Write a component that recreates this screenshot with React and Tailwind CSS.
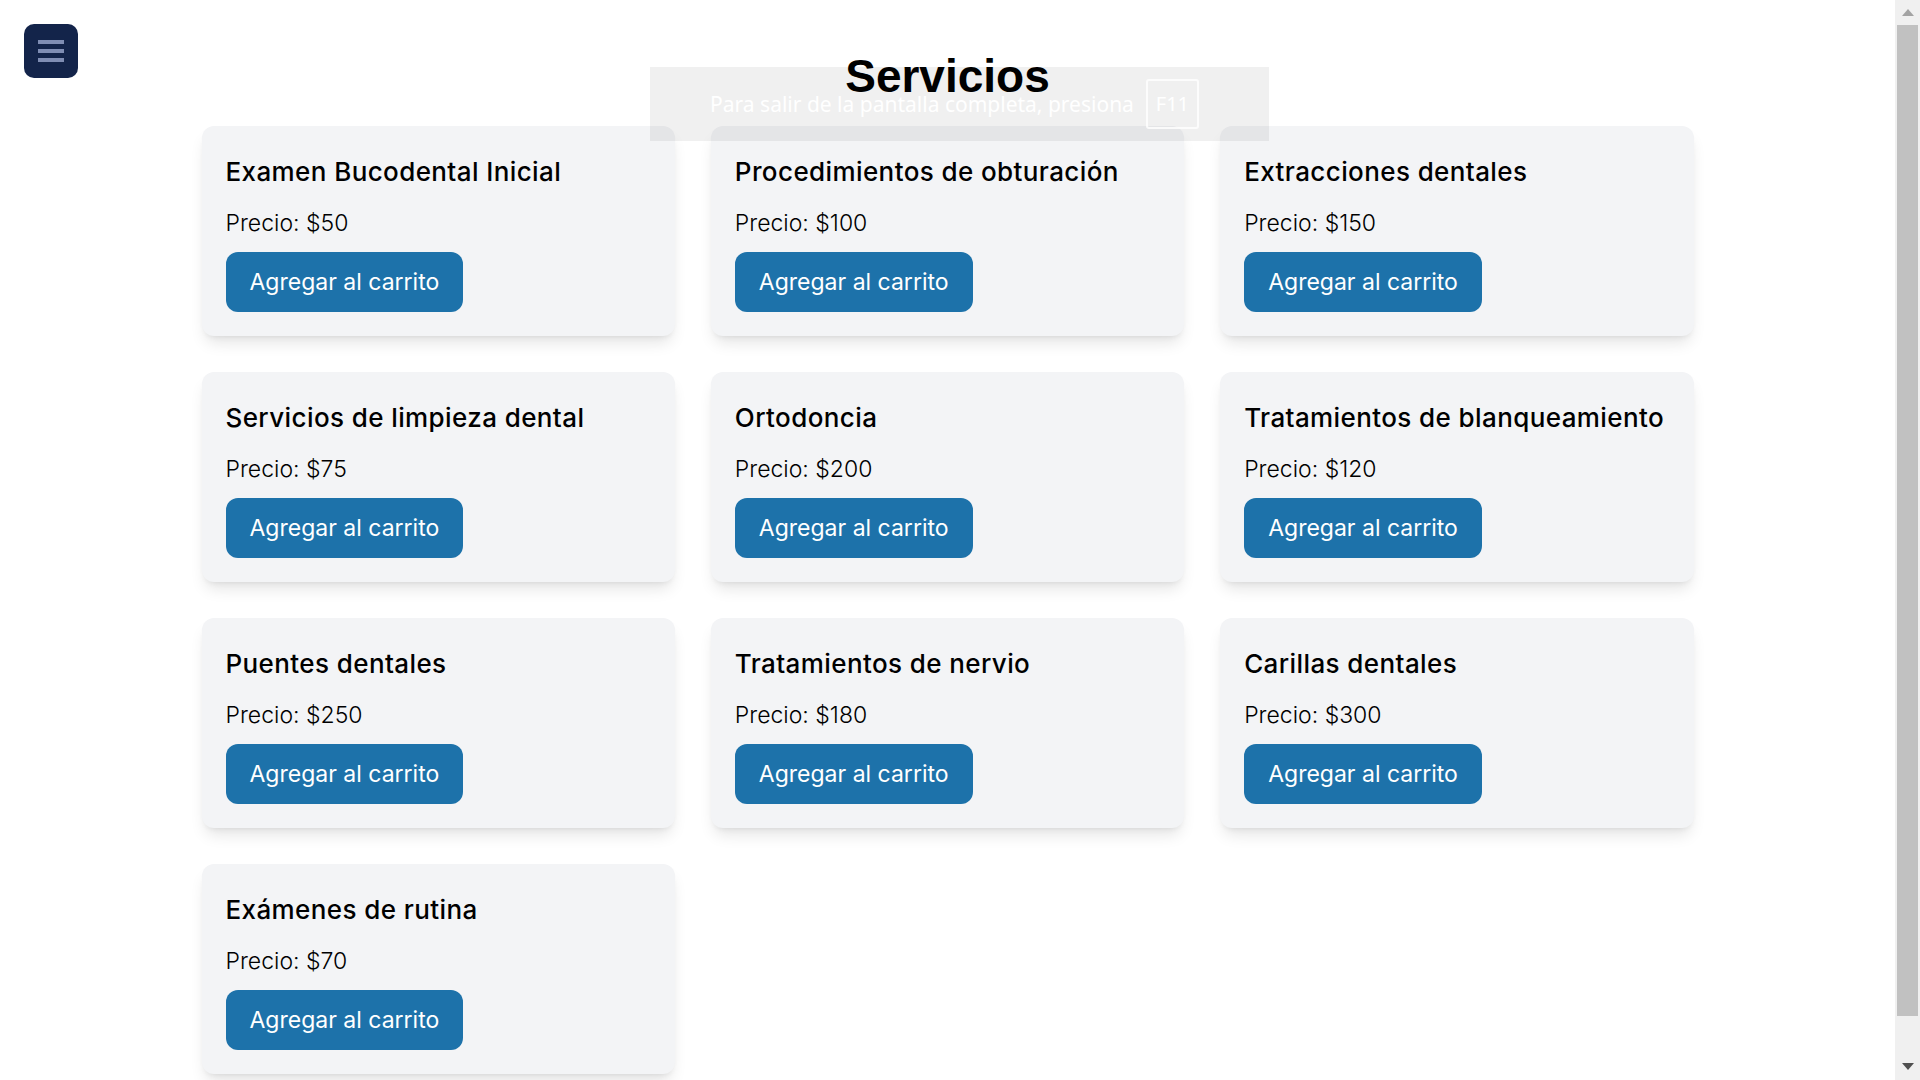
import React from "react";

const servicios = [
  { nombre: "Examen Bucodental Inicial", precio: 50 },
  { nombre: "Procedimientos de obturación", precio: 100 },
  { nombre: "Extracciones dentales", precio: 150 },
  { nombre: "Servicios de limpieza dental", precio: 75 },
  { nombre: "Ortodoncia", precio: 200 },
  { nombre: "Tratamientos de blanqueamiento", precio: 120 },
  { nombre: "Puentes dentales", precio: 250 },
  { nombre: "Tratamientos de nervio", precio: 180 },
  { nombre: "Carillas dentales", precio: 300 },
  { nombre: "Exámenes de rutina", precio: 70 },
];

const ServicioCard = ({ nombre, precio }) => (
  <div className="bg-[#f3f4f6] rounded-xl shadow-lg px-6 pt-6 pb-6 flex flex-col items-start">
    <h2 className="mt-[6px] text-[26px] leading-[32px] font-medium tracking-[0.4px] text-black">
      {nombre}
    </h2>
    <p className="mt-[19px] text-[23px] leading-[32px] font-light text-black">
      Precio: ${precio}
    </p>
    <button className="mt-[13px] bg-[#1d72aa] text-white text-[23px] leading-[32px] font-normal px-6 py-[14px] rounded-xl">
      Agregar al carrito
    </button>
  </div>
);

// barra de desplazamiento del navegador
const Scrollbar = () => (
  <div className="w-[25px] shrink-0 h-full bg-[#f0f0f0] flex flex-col items-center">
    <div className="h-[25px] flex items-center justify-center">
      <svg width="12" height="7" viewBox="0 0 12 7">
        <polygon points="6,0 12,7 0,7" fill="#a3a3a3" />
      </svg>
    </div>
    <div className="w-[21px] h-[991px] bg-[#c1c1c1]" />
    <div className="flex-1 flex items-end justify-center pb-[10px]">
      <svg width="12" height="7" viewBox="0 0 12 7">
        <polygon points="0,0 12,0 6,7" fill="#505050" />
      </svg>
    </div>
  </div>
);

export default function App() {
  return (
    <div className="h-screen w-full flex overflow-hidden bg-white font-['Inter',sans-serif]">
      <div className="relative flex-1 overflow-hidden">
        <button className="absolute top-[24px] left-[24px] w-[54px] h-[54px] rounded-[10px] bg-[#13244a] flex flex-col items-center justify-center gap-[5px]">
          <span className="w-[26px] h-[4px] bg-[#7f8db3]" />
          <span className="w-[26px] h-[4px] bg-[#7f8db3]" />
          <span className="w-[26px] h-[4px] bg-[#7f8db3]" />
        </button>

        <div className="pt-[53px] flex flex-col items-center">
          <h1 className="text-[46px] leading-none font-bold text-black font-['Liberation_Sans',Arial,sans-serif]">
            Servicios
          </h1>
          <div className="mt-[27px] w-[1492px] grid grid-cols-3 gap-x-[36px] gap-y-[36px] pb-[66px]">
            {servicios.map((s) => (
              <ServicioCard key={s.nombre} nombre={s.nombre} precio={s.precio} />
            ))}
          </div>
        </div>

        {/* aviso de pantalla completa */}
        <div className="absolute top-[67px] left-[650px] w-[619px] h-[74px] bg-black/[0.06] flex items-center justify-center gap-[12px] pr-[10px] font-['Noto_Sans',sans-serif] text-white">
          <span className="text-[21px] leading-none">
            Para salir de la pantalla completa, presiona
          </span>
          <span className="w-[53px] h-[50px] border-2 border-white/80 rounded-[3px] flex items-center justify-center text-[20px] leading-none">
            F11
          </span>
        </div>
      </div>
      <Scrollbar />
    </div>
  );
}
